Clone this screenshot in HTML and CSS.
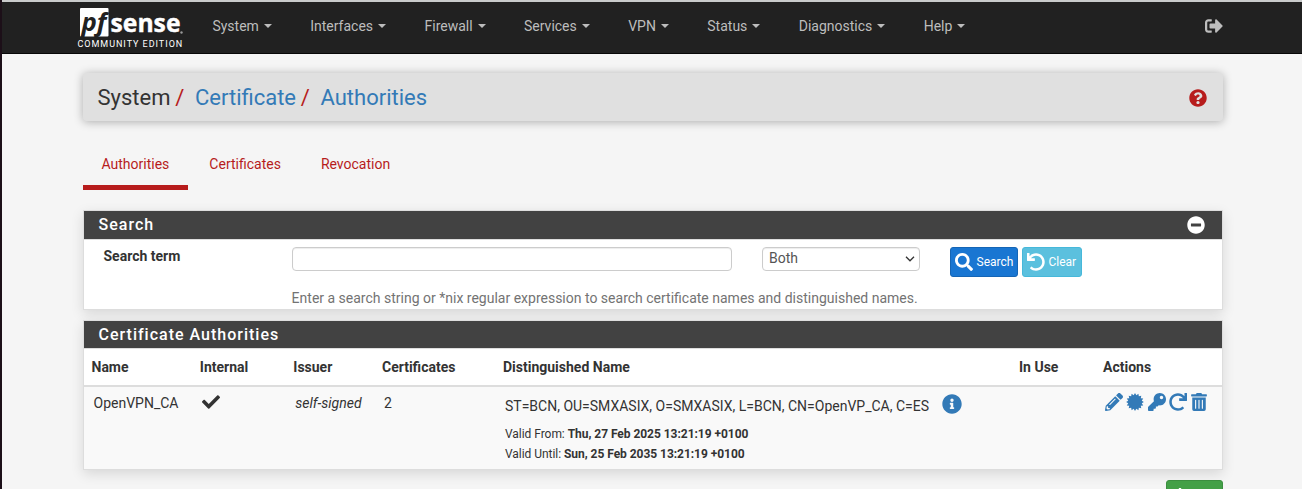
FILE: index.html
```html
<!DOCTYPE html>
<html lang="en">
<head>
<meta charset="utf-8">
<title>System: Certificate: Authorities</title>
<link rel="stylesheet" href="styles.css">
</head>
<body>
<nav class="navbar">
  <a class="brand">
    <svg class="logo" viewBox="0 0 108 30">
      <rect x="3" y="0" width="28.500" height="28.500" rx="1" fill="#fff"/>
      <text class="logo-pf" x="4.500" y="23" textLength="25" lengthAdjust="spacingAndGlyphs">pf</text>
      <text class="logo-sense" x="33.500" y="24" textLength="70" lengthAdjust="spacingAndGlyphs">sense</text>
      <circle cx="104.500" cy="24.500" r="1.200" fill="#999"/>
    </svg>
    <span class="edition">COMMUNITY EDITION</span>
  </a>
  <ul class="menu">
    <li>System<i class="caret"></i></li>
    <li>Interfaces<i class="caret"></i></li>
    <li>Firewall<i class="caret"></i></li>
    <li>Services<i class="caret"></i></li>
    <li>VPN<i class="caret"></i></li>
    <li>Status<i class="caret"></i></li>
    <li>Diagnostics<i class="caret"></i></li>
    <li>Help<i class="caret"></i></li>
  </ul>
  <svg class="icon logout" viewBox="0 0 512 512"><path d="M497 273L329 441c-15 15-41 4.500-41-17v-96H152c-13.300 0-24-10.700-24-24v-96c0-13.300 10.700-24 24-24h136V88c0-21.400 25.900-32 41-17l168 168c9.300 9.400 9.300 24.600 0 34zM192 436v-40c0-6.600-5.400-12-12-12H96c-17.700 0-32-14.300-32-32V160c0-17.700 14.300-32 32-32h84c6.600 0 12-5.400 12-12V76c0-6.600-5.400-12-12-12H96c-53 0-96 43-96 96v192c0 53 43 96 96 96h84c6.600 0 12-5.400 12-12z"/></svg>
</nav>
<main class="container">
  <header class="crumbs">
    <span>System</span><span class="slash">/</span><a>Certificate</a><span class="slash">/</span><a>Authorities</a>
    <svg class="icon help" viewBox="0 0 512 512"><path d="M504 256c0 136.997-111.043 248-248 248S8 392.997 8 256C8 119.083 119.043 8 256 8s248 111.083 248 248zM262.655 90c-54.497 0-89.255 22.957-116.549 63.758-3.536 5.286-2.353 12.415 2.715 16.258l34.699 26.310c5.205 3.947 12.621 3.008 16.665-2.122 17.864-22.658 30.113-35.797 57.303-35.797 20.429 0 45.698 13.148 45.698 32.958 0 14.976-12.363 22.667-32.534 33.976C247.128 238.528 216 254.941 216 296v4c0 6.627 5.373 12 12 12h56c6.627 0 12-5.373 12-12v-1.333c0-28.462 83.186-29.647 83.186-106.667 0-58.002-60.165-102-116.531-102zM256 338c-25.365 0-46 20.635-46 46 0 25.364 20.635 46 46 46s46-20.636 46-46c0-25.365-20.635-46-46-46z"/></svg>
  </header>
  <ul class="tabs">
    <li class="active">Authorities</li>
    <li>Certificates</li>
    <li>Revocation</li>
  </ul>
  <section class="panel search-panel">
    <h2 class="panel-heading">Search
      <svg class="icon collapse" viewBox="0 0 512 512"><path d="M256 8C119 8 8 119 8 256s111 248 248 248 248-111 248-248S393 8 256 8zM124 296c-6.600 0-12-5.400-12-12v-56c0-6.600 5.400-12 12-12h264c6.600 0 12 5.400 12 12v56c0 6.600-5.400 12-12 12H124z"/></svg>
    </h2>
    <div class="search-form">
      <label>Search term</label>
      <input class="field" type="text">
      <div class="field select">Both
        <svg class="chevron" viewBox="0 0 10 6"><path d="M1 .8l4 4 4-4"/></svg>
      </div>
      <div class="buttons">
        <button class="btn btn-search"><svg class="icon" viewBox="0 0 512 512"><path d="M505 442.700L405.300 343c-4.500-4.500-10.600-7-17-7H372c27.600-35.300 44-79.700 44-128C416 93.100 322.900 0 208 0S0 93.100 0 208s93.100 208 208 208c48.300 0 92.700-16.400 128-44v16.300c0 6.400 2.500 12.500 7 17l99.700 99.700c9.400 9.400 24.600 9.400 33.900 0l28.300-28.300c9.400-9.400 9.400-24.600.1-34zM208 336c-70.700 0-128-57.200-128-128 0-70.700 57.200-128 128-128 70.700 0 128 57.200 128 128 0 70.700-57.200 128-128 128z"/></svg>Search</button>
        <button class="btn btn-clear"><svg class="icon" viewBox="0 0 512 512"><path id="undo" d="M212.333 224.333H12c-6.627 0-12-5.373-12-12V12C0 5.373 5.373 0 12 0h48c6.627 0 12 5.373 12 12v78.112C117.773 39.279 184.260 7.470 258.175 8.007c136.906.994 246.448 111.623 246.157 248.532C504.041 393.258 393.120 504 256.333 504c-64.089 0-122.496-24.313-166.510-64.215-5.099-4.622-5.334-12.554-.467-17.420l33.967-33.967c4.474-4.474 11.662-4.717 16.401-.525C170.760 415.336 211.580 432 256.333 432c97.268 0 176-78.716 176-176 0-97.267-78.716-176-176-176-58.496 0-110.280 28.476-142.274 72.333h98.274c6.627 0 12 5.373 12 12v48c0 6.627-5.373 12-12 12z"/></svg>Clear</button>
      </div>
      <p class="hint">Enter a search string or *nix regular expression to search certificate names and distinguished names.</p>
    </div>
  </section>
  <section class="panel ca-panel">
    <h2 class="panel-heading">Certificate Authorities</h2>
    <div class="row head">
      <span>Name</span><span>Internal</span><span>Issuer</span><span>Certificates</span><span>Distinguished Name</span><span>In Use</span><span>Actions</span>
    </div>
    <div class="row entry">
      <span>OpenVPN_CA</span>
      <span><svg class="icon check" viewBox="0 0 512 512"><path d="M173.898 439.404l-166.400-166.400c-9.997-9.997-9.997-26.206 0-36.204l36.203-36.204c9.997-9.998 26.207-9.998 36.204 0L192 312.690 432.095 72.596c9.997-9.997 26.207-9.997 36.204 0l36.203 36.204c9.997 9.997 9.997 26.206 0 36.204l-294.400 294.401c-9.998 9.997-26.207 9.997-36.204-.001z"/></svg></span>
      <span><em>self-signed</em></span>
      <span>2</span>
      <div>
        <div class="dn">ST=BCN, OU=SMXASIX, O=SMXASIX, L=BCN, CN=OpenVP_CA, C=ES
          <svg class="icon info" viewBox="0 0 512 512"><path d="M256 8C119.043 8 8 119.083 8 256c0 136.997 111.043 248 248 248s248-111.003 248-248C504 119.083 392.957 8 256 8zm0 110c23.196 0 42 18.804 42 42s-18.804 42-42 42-42-18.804-42-42 18.804-42 42-42zm56 254c0 6.627-5.373 12-12 12h-88c-6.627 0-12-5.373-12-12v-24c0-6.627 5.373-12 12-12h12v-64h-12c-6.627 0-12-5.373-12-12v-24c0-6.627 5.373-12 12-12h64c6.627 0 12 5.373 12 12v100h12c6.627 0 12 5.373 12 12v24z"/></svg>
        </div>
        <div class="valid">Valid From: <b>Thu, 27 Feb 2025 13:21:19 +0100</b></div>
        <div class="valid">Valid Until: <b>Sun, 25 Feb 2035 13:21:19 +0100</b></div>
      </div>
      <span></span>
      <div class="actions">
        <svg class="icon" viewBox="0 0 512 512"><path d="M497.900 142.100l-46.100 46.100c-4.700 4.700-12.300 4.700-17 0l-111-111c-4.700-4.700-4.700-12.300 0-17l46.100-46.100c18.700-18.700 49.100-18.700 67.900 0l60.100 60.100c18.800 18.700 18.800 49.100 0 67.900zM284.200 99.800L21.600 362.400.4 483.900c-2.900 16.400 11.400 30.600 27.800 27.800l121.500-21.300 262.600-262.600c4.700-4.700 4.700-12.300 0-17l-111-111c-4.800-4.700-12.400-4.700-17.100 0zM124.100 339.900c-5.500-5.500-5.500-14.300 0-19.800l154-154c5.500-5.500 14.300-5.500 19.800 0s5.500 14.300 0 19.800l-154 154c-5.500 5.500-14.300 5.500-19.800 0zM88 424h48v36.300l-64.500 11.300-31.100-31.100L51.700 376H88v48z"/></svg>
        <svg class="icon" viewBox="-9 -9 18 18"><path d="M8.900 0L6.770 1.350 8.220 3.410 5.740 3.830 6.290 6.290 3.830 5.740 3.410 8.220 1.350 6.770 0 8.900-1.350 6.770-3.410 8.220-3.830 5.740-6.290 6.290-5.740 3.830-8.220 3.410-6.770 1.350-8.900 0-6.770-1.350-8.220-3.410-5.740-3.830-6.290-6.290-3.830-5.740-3.410-8.220-1.350-6.770 0-8.900 1.350-6.770 3.410-8.220 3.830-5.740 6.290-6.290 5.740-3.830 8.220-3.410 6.770-1.350z"/></svg>
        <svg class="icon" viewBox="0 0 512 512"><path d="M512 176.001C512 273.203 433.202 352 336 352c-11.220 0-22.190-1.062-32.827-3.069l-24.012 27.014A23.999 23.999 0 0 1 261.223 384H224v40c0 13.255-10.745 24-24 24h-40v40c0 13.255-10.745 24-24 24H24c-13.255 0-24-10.745-24-24v-78.059c0-6.365 2.529-12.470 7.029-16.971l161.802-161.802C163.108 213.814 160 195.271 160 176 160 78.798 238.797.001 335.999 0 433.488-.001 512 78.511 512 176.001zM336 128c0 26.510 21.490 48 48 48s48-21.490 48-48-21.490-48-48-48-48 21.490-48 48z"/></svg>
        <svg class="icon" viewBox="0 0 512 512"><use href="#undo" transform="translate(512 0) scale(-1 1)"/></svg>
        <svg class="icon trash" viewBox="0 0 448 512"><path d="M32 464a48 48 0 0 0 48 48h288a48 48 0 0 0 48-48V128H32zm272-256a16 16 0 0 1 32 0v224a16 16 0 0 1-32 0zm-96 0a16 16 0 0 1 32 0v224a16 16 0 0 1-32 0zm-96 0a16 16 0 0 1 32 0v224a16 16 0 0 1-32 0zM432 32H312l-9.400-18.700A24 24 0 0 0 281.100 0H166.800a23.720 23.720 0 0 0-21.400 13.300L136 32H16A16 16 0 0 0 0 48v32a16 16 0 0 0 16 16h416a16 16 0 0 0 16-16V48a16 16 0 0 0-16-16z"/></svg>
      </div>
    </div>
  </section>
  <button class="btn btn-add"><svg class="icon plus" viewBox="0 0 12 12"><path d="M5 0h2v5h5v2H7v5H5V7H0V5h5z"/></svg></button>
</main>
</body>
</html>
```
FILE: styles.css
```css
* { box-sizing: border-box; }
html { height: 100%; overflow: hidden; }
body {
  margin: 0;
  height: 489px;
  overflow: hidden;
  border-left: 2px solid #1c0f18;
  background: #f5f5f5;
  color: #333;
  font: 14px/20px Roboto, sans-serif;
}
ul { list-style: none; margin: 0; padding: 0; }
.icon { display: block; width: 18px; height: 18px; fill: currentColor; flex: none; }

.navbar {
  display: flex;
  align-items: flex-start;
  height: 54px;
  padding-left: 75px;
  background: #212121;
  border-top: 2px solid #c9cbcb;
  border-bottom: 1px solid #080808;
  color: #bdbdbd;
}
.brand { width: 108px; padding-top: 6px; color: #fff; }
.logo { display: block; width: 108px; height: 30px; overflow: visible; }
.logo-pf { font: italic 700 25px "Open Sans", sans-serif; fill: #212121; }
.logo-sense { font: 700 25px "Open Sans", sans-serif; fill: #fff; stroke: #fff; stroke-width: .4px; }
.edition {
  display: block;
  padding-left: .5px;
  font-size: 9px;
  line-height: 12px;
  letter-spacing: .97px;
  white-space: nowrap;
}
.menu { display: flex; gap: 38.500px; padding: 14px 0 0 27.400px; }
.menu li { display: flex; align-items: center; }
.caret {
  margin-left: 4.900px;
  border-top: 4px solid;
  border-left: 4px solid transparent;
  border-right: 4px solid transparent;
}
.logout { margin: 15px 79.500px 0 auto; }

.container { width: 1140px; margin: 19px 0 0 81px; }
.crumbs {
  display: flex;
  align-items: center;
  height: 48px;
  padding: 2px 16px 0 14.500px;
  border-radius: 4px;
  background: #e0e0e0;
  box-shadow: 0 1px 10px rgba(0, 0, 0, .3);
  font-size: 22px;
}
.crumbs a { color: #337ab7; }
.slash { margin: 0 10.600px 0 4.800px; color: #b71c1c; }
.help { margin-left: auto; color: #b71c1c; }

.tabs { display: flex; gap: 2px; margin-top: 20px; color: #b71c1c; }
.tabs li { height: 49px; padding: 13px 19px 0; border-bottom: 5px solid transparent; }
.tabs .active { border-color: #b71c1c; padding-left: 18.500px; }

.panel {
  margin-top: 20px;
  border: 1px solid #ddd;
  background: #fff;
  box-shadow: 0 4px 12px rgba(0, 0, 0, .12);
}
.panel-heading {
  display: flex;
  align-items: center;
  justify-content: space-between;
  height: 29px;
  margin: 0;
  padding: 0 17px 0 14.500px;
  border-bottom: 1px solid #ddd;
  background: #424242;
  color: #fff;
  font-size: 16px;
  font-weight: 500;
  letter-spacing: 1px;
}
.search-panel { height: 100px; }
.search-form {
  display: grid;
  grid-template-columns: 158px 440px 158px 132px;
  grid-template-rows: 41px 20px;
  column-gap: 30px;
  padding: 7px 0 0 20px;
}
.search-form label { margin: -1px 0 0 -.5px; font-weight: 700; }
.field {
  width: 100%;
  height: 24px;
  border: 1px solid #ccc;
  border-radius: 4px;
  background: #fff;
  box-shadow: inset 0 1px 1px rgba(0, 0, 0, .075);
}
.select { display: flex; justify-content: space-between; align-items: center; padding: 0 4px 2px 6px; color: #555; }
.chevron { width: 10px; height: 6px; margin-top: 2px; fill: none; stroke: #333; stroke-width: 1.300; }
.buttons { display: flex; gap: 4px; }
.btn {
  display: flex;
  align-items: center;
  height: 30px;
  gap: 4px;
  padding: 0 3px 0 3.500px;
  border: 1px solid;
  border-radius: 3px;
  font: 12px/18px Roboto, sans-serif;
  color: #fff;
}
.btn-search { width: 68px; background: #1976d2; border-color: #1565b5; }
.btn-clear { width: 60px; background: #5bc0de; border-color: #46b8da; }
.hint { grid-column: 2 / -1; margin: 0 0 0 -.4px; color: #737373; white-space: nowrap; }

.ca-panel { margin-top: 10px; height: 150px; }
.ca-panel .panel-heading { height: 28px; }
.row {
  display: grid;
  grid-template-columns: 108.300px 93.500px 88.700px 121px 516px 84px 1fr;
  padding-left: 7.500px;
}
.head { height: 38px; padding-top: 8px; border-bottom: 2px solid #ddd; font-weight: 700; }
.entry { height: 82px; padding: 6px 0 0 9.500px; background: #f9f9f9; }
.check { color: #333; }
.dn { display: flex; align-items: center; gap: 13px; padding-top: 3px; white-space: nowrap; }
.info { width: 20px; height: 20px; margin-top: -5px; color: #337ab7; }
.valid { font-size: 12px; line-height: 20px; letter-spacing: -.04px; }
.dn + .valid { margin-top: 8px; }
.actions { display: flex; gap: 3.500px; margin-left: -.3px; color: #337ab7; }
.trash { width: 16px; }
.btn-add { width: 57px; margin: 10px 0 0 auto; padding: 0 6px; background: #43a047; border-color: #3b8e3f; }
.plus { width: 14px; height: 14px; }
```
